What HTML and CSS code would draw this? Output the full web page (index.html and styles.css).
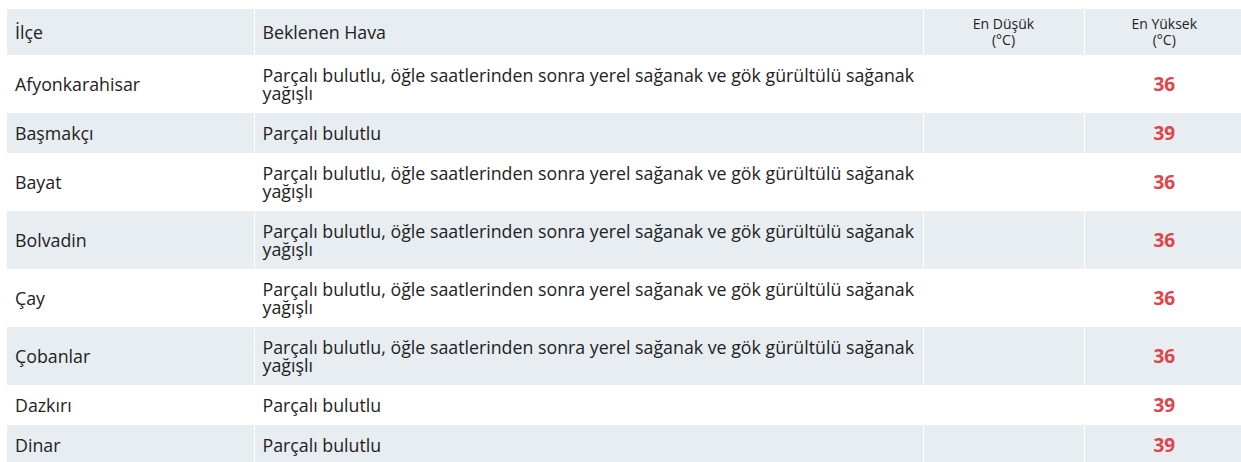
FILE: index.html
```html
<!DOCTYPE html>
<html lang="tr">
<head>
<meta charset="utf-8">
<title>İlçe Hava Durumu</title>
<link rel="stylesheet" href="styles.css">
</head>
<body>
<table class="weather">
  <colgroup>
    <col class="c-district">
    <col class="c-desc">
    <col class="c-min">
    <col class="c-max">
  </colgroup>
  <thead>
    <tr>
      <th class="th-left">İlçe</th>
      <th class="th-left">Beklenen Hava</th>
      <th class="th-small">En Düşük<br>(°C)</th>
      <th class="th-small">En Yüksek<br>(°C)</th>
    </tr>
  </thead>
  <tbody>
    <tr><td>Afyonkarahisar</td><td class="desc">Parçalı bulutlu, öğle saatlerinden sonra yerel sağanak ve gök gürültülü sağanak yağışlı</td><td></td><td class="max">36</td></tr>
    <tr class="alt"><td>Başmakçı</td><td class="desc">Parçalı bulutlu</td><td></td><td class="max">39</td></tr>
    <tr><td>Bayat</td><td class="desc">Parçalı bulutlu, öğle saatlerinden sonra yerel sağanak ve gök gürültülü sağanak yağışlı</td><td></td><td class="max">36</td></tr>
    <tr class="alt"><td>Bolvadin</td><td class="desc">Parçalı bulutlu, öğle saatlerinden sonra yerel sağanak ve gök gürültülü sağanak yağışlı</td><td></td><td class="max">36</td></tr>
    <tr><td>Çay</td><td class="desc">Parçalı bulutlu, öğle saatlerinden sonra yerel sağanak ve gök gürültülü sağanak yağışlı</td><td></td><td class="max">36</td></tr>
    <tr class="alt"><td>Çobanlar</td><td class="desc">Parçalı bulutlu, öğle saatlerinden sonra yerel sağanak ve gök gürültülü sağanak yağışlı</td><td></td><td class="max">36</td></tr>
    <tr><td>Dazkırı</td><td class="desc">Parçalı bulutlu</td><td></td><td class="max">39</td></tr>
    <tr class="alt"><td>Dinar</td><td class="desc">Parçalı bulutlu</td><td></td><td class="max">39</td></tr>
  </tbody>
</table>
</body>
</html>
```

FILE: styles.css
```css
html, body {
  margin: 0;
  padding: 0;
  background: #ffffff;
  overflow: hidden;
}
body {
  padding: 9px 0 0 7px;
  font-family: "Open Sans", "DejaVu Sans", sans-serif;
  color: #222222;
}
.weather {
  width: 1237px;
  border-collapse: collapse;
  table-layout: fixed;
}
.c-district { width: 247px; }
.c-desc { width: 669px; }
.c-min { width: 161px; }
.c-max { width: 160px; }

.weather th,
.weather td {
  border-right: 1px solid #ffffff;
  padding: 11px 8px;
  vertical-align: middle;
}
.weather th:last-child,
.weather td:last-child {
  border-right: none;
}
.weather thead tr,
.weather tr.alt {
  background: #e7edf1;
}
.weather td {
  font-size: 17.8px;
  line-height: 18px;
}
.weather th.th-left {
  text-align: left;
  font-weight: normal;
  font-size: 17.8px;
  line-height: 18px;
}
.weather th.th-small {
  text-align: center;
  font-weight: normal;
  font-size: 14px;
  line-height: 16px;
  padding: 7px 8px;
}
.weather td.desc {
  line-height: 18px;
  padding: 11px 0 11px 8px;
}
.weather td.max {
  text-align: center;
  font-weight: bold;
  font-size: 19px;
  color: #e0444a;
}
```
